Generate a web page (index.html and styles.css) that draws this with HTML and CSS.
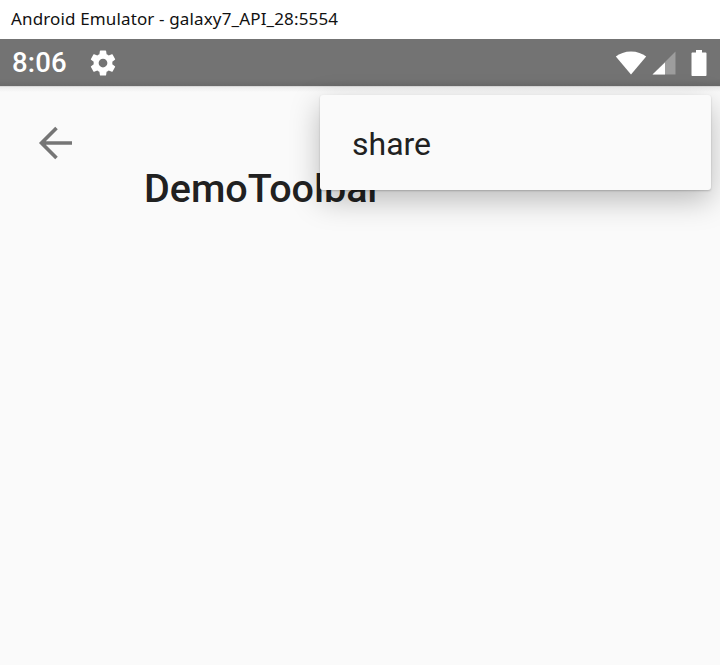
FILE: index.html
```html
<!DOCTYPE html>
<html lang="en">
<head>
<meta charset="utf-8">
<title>Android Emulator</title>
<link rel="stylesheet" href="styles.css">
</head>
<body>
<div class="titlebar">Android Emulator - galaxy7_API_28:5554</div>
<div class="screen">
  <div class="status">
    <div class="status-left">
      <span class="clock">8:06</span>
      <svg class="gear" viewBox="0 0 24 24" width="30" height="30"><path fill="#fff" d="M19.43 12.98c.04-.32.07-.64.07-.98s-.03-.66-.07-.98l2.11-1.65c.19-.15.24-.42.12-.64l-2-3.46c-.12-.22-.39-.3-.61-.22l-2.49 1c-.52-.4-1.08-.73-1.69-.98l-.38-2.65C14.46 2.18 14.25 2 14 2h-4c-.25 0-.46.18-.49.42l-.38 2.65c-.61.25-1.17.59-1.69.98l-2.49-1c-.23-.09-.49 0-.61.22l-2 3.46c-.13.22-.07.49.12.64l2.11 1.65c-.04.32-.07.65-.07.98s.03.66.07.98l-2.11 1.65c-.19.15-.24.42-.12.64l2 3.46c.12.22.39.3.61.22l2.49-1c.52.4 1.08.73 1.69.98l.38 2.65c.03.24.24.42.49.42h4c.25 0 .46-.18.49-.42l.38-2.65c.61-.25 1.17-.59 1.69-.98l2.49 1c.23.09.49 0 .61-.22l2-3.46c.12-.22.07-.49-.12-.64l-2.11-1.65zM12 15.5c-1.93 0-3.5-1.57-3.5-3.5s1.57-3.5 3.5-3.5 3.5 1.57 3.5 3.5-1.57 3.5-3.5 3.5z"/></svg>
    </div>
    <div class="status-right">
      <svg class="wifi" viewBox="0 0 32 24" width="32" height="24"><path fill="#fff" d="M16 23.5 .8 5.6C4.6 2.4 10 .4 16 .4s11.400 2 15.200 5.200z"/></svg>
      <svg class="signal" viewBox="0 0 24 24" width="24" height="24"><path fill="#fff" fill-opacity=".3" d="M23.500 .5v23H.5z"/><path fill="#fff" d="M13 11.500v12H.5z"/></svg>
      <svg class="battery" viewBox="0 0 16 26" width="16" height="26"><path fill="#fff" d="M5 0h6v2.500h3.500c.6 0 1 .4 1 1V25c0 .6-.4 1-1 1h-13c-.6 0-1-.4-1-1V3.500c0-.6.4-1 1-1H5z"/></svg>
    </div>
  </div>
  <div class="content">
    <svg class="back" viewBox="0 0 36 36" width="36" height="36"><path fill="none" stroke="#757575" stroke-width="3.600" d="M34 18H4M18.500 3 3.500 18l15 15"/></svg>
    <div class="app-title">DemoToolbar</div>
    <div class="menu"><span class="menu-item">share</span></div>
  </div>
</div>
</body>
</html>
```
FILE: styles.css
```css
html, body {
  margin: 0;
  padding: 0;
  width: 720px;
  height: 665px;
  overflow: hidden;
  background: #fafafa;
}
.titlebar {
  height: 39px;
  box-sizing: border-box;
  padding: 9px 0 0 11px;
  background: #fff;
  color: #111;
  font: 17px/20px "Noto Sans", sans-serif;
  letter-spacing: 0.14px;
  white-space: nowrap;
}
.screen {
  height: 626px;
  display: flex;
  flex-direction: column;
}
.status {
  height: 48px;
  box-sizing: border-box;
  border-bottom: 1px solid #d9d9d9;
  background: linear-gradient(#737373 85%, #6a6a6a);
  display: flex;
  justify-content: space-between;
  align-items: center;
  padding: 0 13px 0 12px;
}
.status-left, .status-right {
  display: flex;
  align-items: center;
}
.clock {
  color: #fff;
  font: 500 27.500px/32px Roboto, sans-serif;
  letter-spacing: 0.2px;
}
.gear {
  margin-left: 21px;
}
.status-right svg {
  display: block;
}
.wifi {
  margin-left: 1px;
}
.signal {
  margin-left: 5px;
  margin-top: 1px;
}
.battery {
  margin-left: 15px;
}
.content {
  flex: 1;
  position: relative;
  background: linear-gradient(#ececec, #fafafa 5px);
  padding: 38px 0 0 38px;
}
.back {
  display: block;
}
.app-title {
  margin: 3px 0 0 106px;
  color: #212121;
  font: 500 39.500px/50px Roboto, sans-serif;
  white-space: nowrap;
}
.menu {
  position: absolute;
  left: 320px;
  top: 8px;
  width: 391px;
  height: 95px;
  box-sizing: border-box;
  padding: 3px 32px 0;
  display: flex;
  align-items: center;
  background: #fafafa;
  border-radius: 3px;
  box-shadow: 0 1px 2px rgba(0, 0, 0, .2), 0 10px 30px rgba(0, 0, 0, .26);
}
.menu-item {
  color: #212121;
  font: 400 32px/40px Roboto, sans-serif;
}
```
